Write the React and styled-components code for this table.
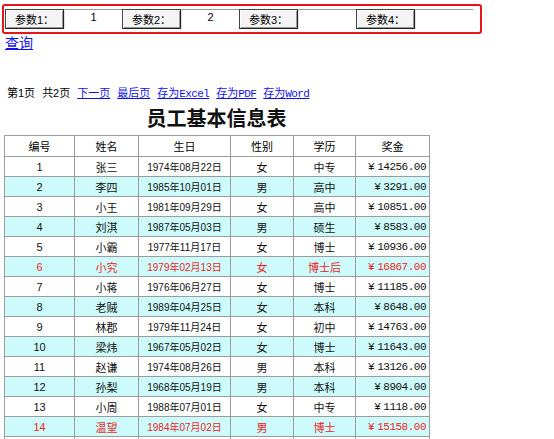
import React from "react";
import styled, { createGlobalStyle } from "styled-components";

const Global = createGlobalStyle`
  html, body { margin: 0; padding: 0; background: #fff; }
  body { font-family: "Liberation Sans", "Noto Sans CJK SC", sans-serif; font-size: 12px; color: #000; }
`;

const Page = styled.div`
  width: 554px;
  height: 439px;
  overflow: hidden;
`;

const ParamBar = styled.div`
  box-sizing: border-box;
  margin: 4px 0 0 2px;
  width: 480px;
  height: 30px;
  border: 2px solid #e8141c;
  border-radius: 3px;
  display: flex;
  align-items: center;
  padding: 0 0 0 1px;
`;

const ParamLabel = styled.div`
  box-sizing: border-box;
  width: 59px;
  height: 20px;
  border: 1px solid #444;
  border-right-color: #222;
  border-bottom-color: #222;
  box-shadow: inset 1px 1px 0 #fff, inset -1px -1px 0 #999;
  background: #f4f4f4;
  display: flex;
  align-items: center;
  justify-content: center;
  font-size: 11px;
`;

const ParamInput = styled.div`
  box-sizing: border-box;
  width: 58px;
  height: 20px;
  border-top: 1px solid #9a9a9a;
  border-left: 1px solid #e0e0e0;
  display: flex;
  justify-content: center;
  padding-top: 1px;
  font-size: 11px;
`;

const QueryLink = styled.a`
  display: inline-block;
  margin: 1px 0 0 5px;
  font-size: 14px;
  line-height: 17px;
  color: #1212e8;
  text-decoration: underline;
`;

const Pager = styled.div`
  margin: 33px 0 0 7px;
  height: 16px;
  line-height: 16px;
  display: flex;
  gap: 7px;
  font-size: 11px;
`;

const PagerText = styled.span`
  color: #000;
`;

const PagerLink = styled.a`
  color: #1212e8;
  text-decoration: underline;
  font-family: ${(p) => (p.$mono ? '"Liberation Mono", "Noto Sans CJK SC", monospace' : 'inherit')};
  font-size: 11px;
  letter-spacing: ${(p) => (p.$mono ? "-0.6px" : "0")};
`;

const CjkPart = styled.span`
  font-family: "Liberation Sans", "Noto Sans CJK SC", sans-serif;
  font-size: 11px;
  letter-spacing: 0;
`;

const Title = styled.h1`
  margin: 4px 0 0 4px;
  width: 425px;
  text-align: center;
  font-family: "Noto Sans CJK SC", sans-serif;
  font-weight: bold;
  font-size: 20px;
  line-height: 26px;
  height: 26px;
  color: #111;
`;

const Table = styled.table`
  margin: 4px 0 0 4px;
  border-collapse: collapse;
  table-layout: fixed;
  width: 425px;
`;

const Th = styled.th`
  box-sizing: border-box;
  height: 21px;
  padding: 0;
  border: 1px solid #9c9c9c;
  font-weight: normal;
  font-size: 11px;
  text-align: center;
  background: #fff;
`;

const Tr = styled.tr`
  background: ${(p) => (p.$alt ? "#cdfbfb" : "#fff")};
  color: ${(p) => (p.$red ? "#ee1c24" : "#111")};
`;

const Td = styled.td`
  box-sizing: border-box;
  height: 20px;
  padding: 0 ${(p) => (p.$right ? "3px" : "0")} 0 0;
  border: 1px solid #9c9c9c;
  text-align: ${(p) => (p.$right ? "right" : "center")};
  font-size: ${(p) => (p.$small ? "10px" : "11px")};
  font-family: ${(p) =>
    p.$mono ? '"Liberation Mono", monospace' : 'inherit'};
  letter-spacing: ${(p) => (p.$mono ? "-0.5px" : "0")};
  white-space: nowrap;
`;

const Yen = styled.span`
  margin-right: 3px;
`;

const cols = [70, 64, 92, 63, 62, 74];
const heads = ["编号", "姓名", "生日", "性别", "学历", "奖金"];

const rows = [
  ["张三", "1974年08月22日", "女", "中专", "14256.00"],
  ["李四", "1985年10月01日", "男", "高中", "3291.00"],
  ["小王", "1981年09月29日", "女", "高中", "10851.00"],
  ["刘淇", "1987年05月03日", "男", "硕生", "8583.00"],
  ["小霸", "1977年11月17日", "女", "博士", "10936.00"],
  ["小究", "1979年02月13日", "女", "博士后", "16867.00", true],
  ["小蒋", "1976年06月27日", "女", "博士", "11185.00"],
  ["老贼", "1989年04月25日", "女", "本科", "8648.00"],
  ["林郡", "1979年11月24日", "女", "初中", "14763.00"],
  ["梁炜", "1967年05月02日", "女", "博士", "11643.00"],
  ["赵谦", "1974年08月26日", "男", "本科", "13126.00"],
  ["孙梨", "1968年05月19日", "男", "本科", "8904.00"],
  ["小周", "1988年07月01日", "女", "中专", "1118.00"],
  ["温望", "1984年07月02日", "男", "博士", "15158.00", true],
];

const params = [
  ["参数1：", "1"],
  ["参数2：", "2"],
  ["参数3：", ""],
  ["参数4：", ""],
];

export default function App() {
  return (
    <Page>
      <Global />
      <ParamBar>
        {params.map(([l, v]) => (
          <React.Fragment key={l}>
            <ParamLabel>{l}</ParamLabel>
            <ParamInput>{v}</ParamInput>
          </React.Fragment>
        ))}
      </ParamBar>
      <QueryLink href="#">查询</QueryLink>
      <Pager>
        <PagerText>第1页</PagerText>
        <PagerText>共2页</PagerText>
        <PagerLink href="#">下一页</PagerLink>
        <PagerLink href="#">最后页</PagerLink>
        <PagerLink href="#" $mono><CjkPart>存为</CjkPart>Excel</PagerLink>
        <PagerLink href="#" $mono><CjkPart>存为</CjkPart>PDF</PagerLink>
        <PagerLink href="#" $mono><CjkPart>存为</CjkPart>Word</PagerLink>
      </Pager>
      <Title>员工基本信息表</Title>
      <Table>
        <colgroup>
          {cols.map((w, i) => (
            <col key={i} style={{ width: w }} />
          ))}
        </colgroup>
        <thead>
          <tr>
            {heads.map((h) => (
              <Th key={h}>{h}</Th>
            ))}
          </tr>
        </thead>
        <tbody>
          {rows.map((r, i) => (
            <Tr key={i} $alt={i % 2 === 1} $red={r[5]}>
              <Td>{i + 1}</Td>
              <Td>{r[0]}</Td>
              <Td $small>{r[1]}</Td>
              <Td>{r[2]}</Td>
              <Td>{r[3]}</Td>
              <Td $right $mono><Yen>¥</Yen>{r[4]}</Td>
            </Tr>
          ))}
          <Tr>
            <Td />
            <Td />
            <Td />
            <Td />
            <Td />
            <Td />
          </Tr>
        </tbody>
      </Table>
    </Page>
  );
}
